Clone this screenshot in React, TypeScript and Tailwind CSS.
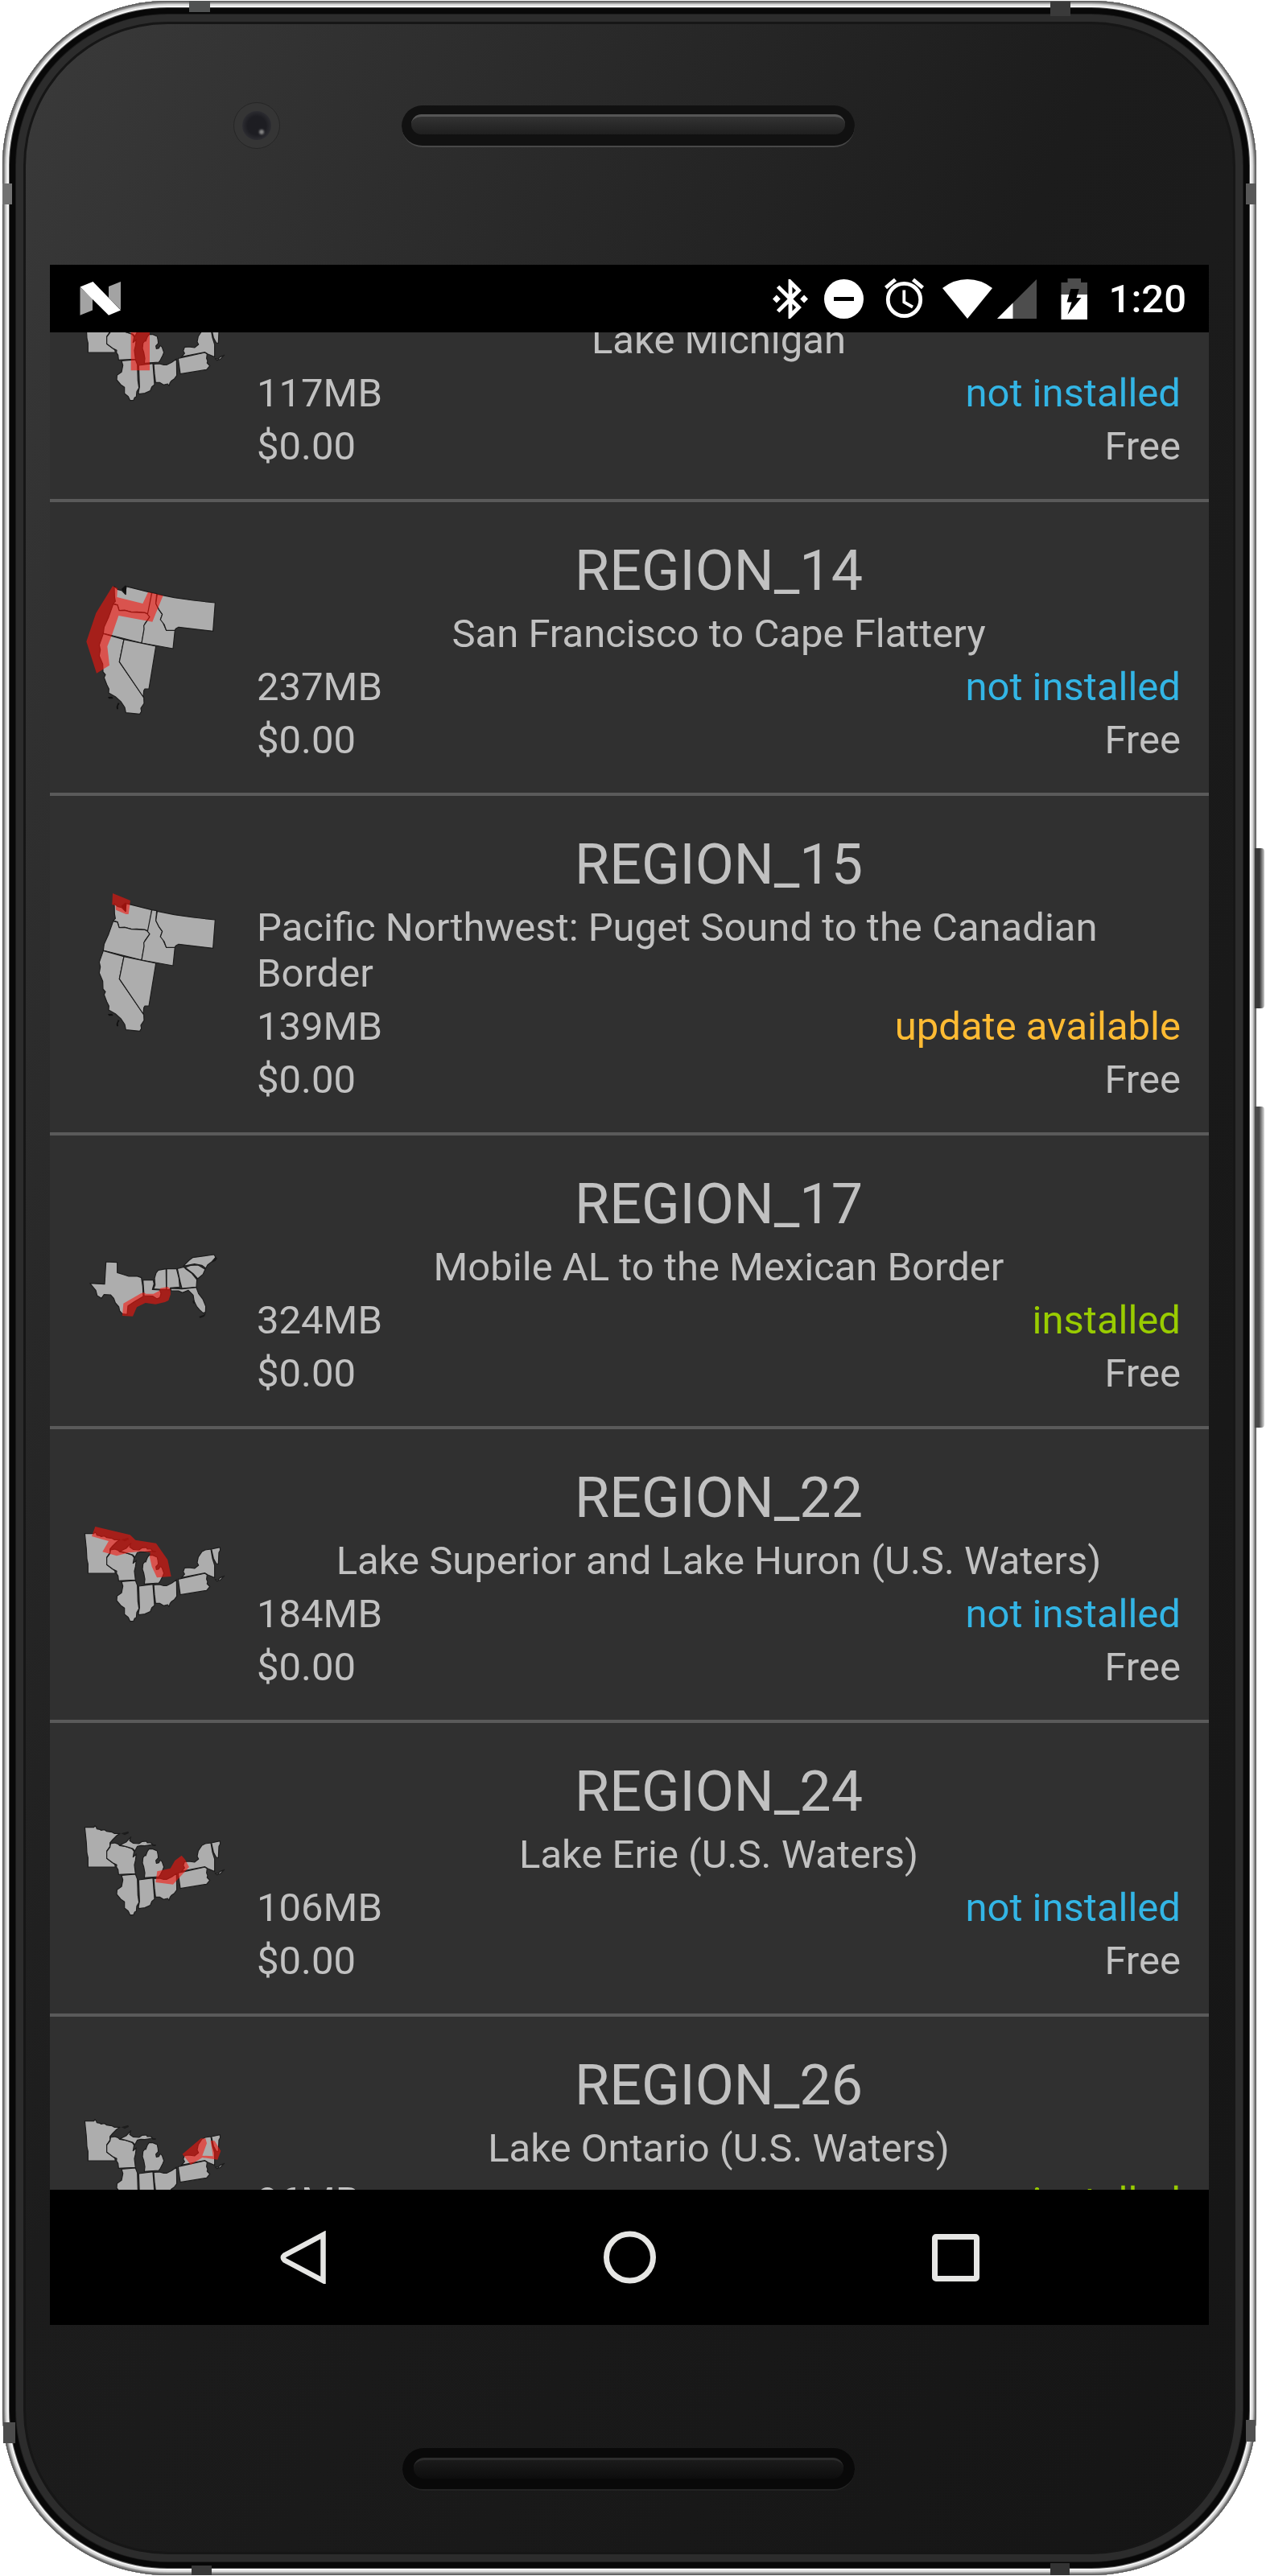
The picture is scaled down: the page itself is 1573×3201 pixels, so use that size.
import type { ReactNode } from "react";

type Status = "not installed" | "update available" | "installed";

interface Region {
  title?: string;
  description: string;
  size: string;
  status: Status;
  map: ReactNode;
}

const statusColor: Record<Status, string> = {
  "not installed": "text-[#33b5e5]",
  "update available": "text-[#ffbb33]",
  installed: "text-[#99cc00]",
};

const Coverage = ({ points }: { points: string }) => (
  <polygon points={points} fill="rgb(248,18,10)" fillOpacity="0.584" />
);

const States = ({ paths }: { paths: string[] }) => (
  <g fill="#adadad" stroke="#1c1c1c" strokeWidth="3.6" strokeLinejoin="round">
    {paths.map((d) => (
      <path key={d} d={d} />
    ))}
  </g>
);

const lakeStates = [
  "M76 92L110 92L114 86L119 92L121 98L133 100L136 103L150 101L158 107L178 110L186 115L207 115L195 123L180 138L170 150L170 163L158 180L158 208L188 230L190 240L88 240L88 205L84 188L82 150Z",
  "M172 153L188 150L200 154L206 160L230 164L253 172L260 182L256 203L268 192L265 215L261 232L265 265L202 268L200 250L194 240L195 232L180 224L158 208L158 182L170 166Z",
  "M207 158L230 147L238 138L248 128L243 142L256 151L278 153L290 145L306 144L309 150L323 150L328 156L300 161L285 160L272 163L263 180L254 171L230 164Z",
  "M316 172L330 173L346 180L349 195L350 206L341 216L343 226L352 224L357 214L364 220L371 240L366 252L358 268L352 276L298 280L300 262L296 240L291 225L293 205L300 196L303 198L309 182Z",
  "M213 271L265 267L272 285L274 345L278 372L270 386L268 405L262 408L258 418L245 419L238 404L224 393L224 370L210 360L195 342L196 325L213 313L218 288Z",
  "M277 288L330 281L336 360L326 368L320 383L300 392L278 395L276 390L280 368Z",
  "M333 283L355 282L370 286L382 286L400 277L418 264L419 326L410 338L400 345L394 352L390 364L385 357L370 361L355 352L340 352L336 320Z",
  "M424 262L518 241L524 240L532 246L530 262L534 272L532 279L542 290L530 304L432 320Z",
  "M436 257L448 243L443 234L448 220L465 219L485 222L500 210L495 200L499 180L512 160L525 153L546 150L552 185L560 210L560 257L535 246L524 239L440 255Z",
  "M548 150L580 143L581 154L576 163L574 205L566 204L556 185Z",
  "M562 263L574 264L580 257L596 250L580 266L568 269Z",
];

const westStates = [
  "M186 126L198 137L215 142L222 150L228 156L230 126L326 150L313 230L300 224L270 221L250 222L225 215L204 216L198 195L182 190L190 182L187 165Z",
  "M182 192L198 196L204 216L225 215L250 222L300 224L313 230L318 240L300 265L298 285L288 337L145 301L148 278L165 240Z",
  "M326 150L344 153L341 190L352 212L365 230L358 250L366 252L369 265L380 290L412 290L405 358L288 337L297 285L296 272L318 240L310 230Z",
  "M346 155L410 168L480 178L562 187L554 293L426 278L415 284L412 290L380 290L372 268L358 250L365 230L352 212L341 190Z",
  "M145 302L222 324L205 407L296 540L297 562L285 580L287 592L281 602L229 597L225 577L210 555L190 537L165 523L166 508L158 492L148 466L153 455L144 445L143 416L130 385L134 362L130 345Z",
  "M222 324L341 349L315 508L300 508L296 515L294 538L205 407Z",
];

const gulfStates = [
  "M155 144L197 146L197 184L222 192L240 198L270 197L287 203L292 235L294 273L262 292L237 308L234 340L216 338L206 327L203 312L190 297L184 280L172 267L148 266L138 280L122 270L117 250L95 224L150 227Z",
  "M293 212L331 212L334 226L328 247L356 249L360 262L356 277L345 282L330 272L297 270Z",
  "M350 175L379 170L380 247L362 247L332 245L338 230L336 205L342 185Z",
  "M381 170L418 170L427 205L430 238L395 241L393 248L381 247Z",
  "M421 169L445 163L452 170L475 187L494 210L492 238L438 243L432 220Z",
  "M395 243L438 245L488 240L492 240L500 262L516 283L527 310L526 332L517 335L503 322L493 310L484 292L480 268L462 250L440 259L425 252L398 252Z",
  "M450 165L470 157L498 156L505 160L525 172L517 190L497 207L480 188Z",
  "M443 160L465 138L478 128L558 117L564 127L548 145L534 155L527 168L512 157L485 152Z",
];

const RegionMap = ({ viewBox, paths, coverage, children }: {
  viewBox: string;
  paths: string[];
  coverage: string;
  children?: ReactNode;
}) => (
  <svg viewBox={viewBox} className="h-[185px] w-[185px] shrink-0 overflow-visible">
    <States paths={paths} />
    {children}
    <Coverage points={coverage} />
  </svg>
);

const LakesMap = ({ coverage }: { coverage: string }) => (
  <RegionMap viewBox="51 -33 555 555" paths={lakeStates} coverage={coverage}>
    <path d="M212 115L238 107L240 114L225 121ZM326 155L342 157L340 162L328 161Z" fill="#1c1c1c" />
  </RegionMap>
);

const WestMap = ({ coverage }: { coverage: string }) => (
  <RegionMap viewBox="51 76 555 555" paths={westStates} coverage={coverage}>
    <path d="M212 136L228 122L232 128L229 158L220 146ZM162 538L178 537L182 544L166 545ZM194 575L200 560L206 562L200 572L201 584L195 584Z" fill="#111" />
  </RegionMap>
);

const GulfMap = ({ coverage }: { coverage: string }) => (
  <RegionMap viewBox="51 -63 555 555" paths={gulfStates} coverage={coverage}>
    <path d="M563 125L570 131L563 140L550 147L557 136ZM478 290L485 288L487 298L480 299ZM502 348L518 342L528 334L522 347L506 354Z" fill="#181818" />
  </RegionMap>
);

const regions: Region[] = [
  {
    description: "Lake Michigan",
    size: "117MB",
    status: "not installed",
    map: <LakesMap coverage="248,150 318,150 318,307 248,307" />,
  },
  {
    title: "REGION_14",
    description: "San Francisco to Cape Flattery",
    size: "237MB",
    status: "not installed",
    map: (
      <WestMap coverage="180,125 198,133 196,166 292,190 312,147 368,160 328,258 202,235 178,305 160,350 168,420 120,450 82,332 118,225" />
    ),
  },
  {
    title: "REGION_15",
    description: "Pacific Northwest: Puget Sound to the Canadian Border",
    size: "139MB",
    status: "update available",
    map: <WestMap coverage="180,88 246,115 239,166 230,166 192,150 191,134 178,130" />,
  },
  {
    title: "REGION_17",
    description: "Mobile AL to the Mexican Border",
    size: "324MB",
    status: "installed",
    map: (
      <GulfMap coverage="216,345 220,299 285,262 295,258 305,263 332,263 354,252 358,242 385,237 395,245 396,265 388,288 375,294 340,302 302,297 270,313 255,347" />
    ),
  },
  {
    title: "REGION_22",
    description: "Lake Superior and Lake Huron (U.S. Waters)",
    size: "184MB",
    status: "not installed",
    map: (
      <LakesMap coverage="115,66 245,97 265,116 342,128 385,190 398,252 345,256 326,215 318,180 320,162 290,158 240,163 195,175 142,160 165,120 102,102" />
    ),
  },
  {
    title: "REGION_24",
    description: "Lake Erie (U.S. Waters)",
    size: "106MB",
    status: "not installed",
    map: <LakesMap coverage="437,197 450,212 465,240 405,305 340,297 346,256 395,245 412,216" />,
  },
  {
    title: "REGION_26",
    description: "Lake Ontario (U.S. Waters)",
    size: "96MB",
    status: "installed",
    map: (
      <LakesMap coverage="509,157 526,157 531,175 514,221 554,223 545,165 560,166 583,203 571,236 514,228 471,255 440,215" />
    ),
  },
];

const Row = ({ region }: { region: Region }) => (
  <li className="flex items-center gap-[37px] border-b-4 border-[#5a5a5a] p-[35px]">
    {region.map}
    <div className="flex min-w-0 flex-1 flex-col">
      <h2 className="h-[93px] pt-[9px] text-center text-[70px] leading-[82px]">{region.title}</h2>
      <p className="self-center pt-[7px] pb-[2px] leading-[57px]">{region.description}</p>
      <div className="flex justify-between pt-[7px] pb-[2px] leading-[57px]">
        <span>{region.size}</span>
        <span className={statusColor[region.status]}>{region.status}</span>
      </div>
      <div className="flex justify-between pt-[7px] pb-[2px] leading-[57px]">
        <span>$0.00</span>
        <span>Free</span>
      </div>
    </div>
  </li>
);

const StatusBar = () => (
  <div className="flex h-[84px] shrink-0 items-center bg-black pr-[28px] pl-[37px] text-white">
    <svg viewBox="99 350 51 42" className="mr-auto h-[42px] w-[51px]">
      <path d="M99.500 357L115 371V385.500L99.500 391.700ZM135 356L150 350V385L135 370Z" fill="#a3a3a3" />
      <path d="M99.500 356.500L115.500 350L150 385.500L135 391.700Z" fill="#fff" />
    </svg>
    <svg viewBox="3 2 18 20" className="h-[49px] w-[44px]" fill="currentColor">
      <path d="M7 12l-2-2-2 2 2 2 2-2zm10.710-4.290L12 2h-1v7.590L6.410 5 5 6.410 10.590 12 5 17.590 6.410 19 11 14.410V22h1l5.710-5.710-4.300-4.290 4.300-4.290zM13 5.830l1.880 1.880L13 9.590V5.830zm1.880 10.460L13 18.170v-3.760l1.880 1.880zM19 10l-2 2 2 2 2-2-2-2z" />
    </svg>
    <svg viewBox="0 0 49 49" className="ml-[20px] h-[49px] w-[49px]">
      <circle cx="24.500" cy="24.500" r="24.500" fill="#fff" />
      <rect x="12" y="22" width="25" height="5" fill="#000" />
    </svg>
    <svg viewBox="1100 347 49 50" className="ml-[26px] h-[50px] w-[49px]" fill="none" stroke="#fff" strokeWidth="4.800">
      <circle cx="1124.500" cy="373.500" r="20.200" />
      <path d="M1101.500 358.500L1113.500 348.500M1147.500 358.500L1135.500 348.500" />
      <path d="M1124.300 361.500V376.500L1135 382.500" strokeWidth="3.800" />
    </svg>
    <svg viewBox="1172 346 62 49" className="ml-[23px] h-[49px] w-[62px]">
      <path d="M1203 395L1172 357Q1186 346 1203 346T1234 357Z" fill="#fff" />
    </svg>
    <svg viewBox="1240 346 49 49" className="ml-[6px] h-[49px] w-[49px]">
      <path d="M1289 346V395H1240Z" fill="#4d4d4d" />
      <path d="M1259.500 375.500V395H1240Z" fill="#fff" />
    </svg>
    <svg viewBox="1319 345 33 51" className="ml-[30px] h-[51px] w-[33px]">
      <path d="M1319.500 350H1327.500V345H1344V350H1352V365H1319.500Z" fill="#4d4d4d" />
      <path d="M1319.500 365H1352V396H1319.500Z" fill="#fff" />
      <path d="M1331.400 358H1341.700L1338.500 369H1344.500L1327.400 390L1332.600 374.500H1326.600Z" fill="#000" />
    </svg>
    <span className="ml-[27px] text-[49px] leading-[57px] font-medium">1:20</span>
  </div>
);

const NavBar = () => (
  <nav className="flex h-[168px] shrink-0 items-center justify-center bg-black">
    <button className="flex w-[405px] justify-center">
      <svg viewBox="349 2772 58 66" className="h-[66px] w-[58px]">
        <path d="M402.500 2777V2834L354.500 2808.500Q351 2805.500 354.500 2802.500Z" fill="none" stroke="#e6e6e4" strokeWidth="6.500" />
      </svg>
    </button>
    <button className="flex w-[405px] justify-center">
      <svg viewBox="0 0 66 66" className="h-[66px] w-[66px]">
        <circle cx="33.500" cy="33" r="29" fill="none" stroke="#e6e6e4" strokeWidth="7" />
      </svg>
    </button>
    <button className="flex w-[405px] justify-center">
      <svg viewBox="0 0 60 60" className="h-[60px] w-[60px]">
        <rect x="4.500" y="4.500" width="52" height="52" rx="1.500" fill="none" stroke="#e6e6e4" strokeWidth="7" />
      </svg>
    </button>
  </nav>
);

export default function App() {
  return (
    <div className="relative h-[3201px] w-[1573px] overflow-hidden bg-white font-[Roboto,sans-serif]">
      <div className="absolute top-[1054px] left-[1559px] h-[199px] w-[12px] rounded-r-[4px] bg-linear-to-r from-[#383838] from-50% to-[#cfcfcf]" />
      <div className="absolute top-[1375px] left-[1559px] h-[399px] w-[12px] rounded-r-[4px] bg-linear-to-r from-[#484848] from-45% to-[#e0e0e0]" />

      <div className="mt-px ml-[3px] h-[3199px] w-[1558px] rounded-[205px] bg-linear-to-br from-[#3b3b3b] via-[#1c1c1c] via-45% to-[#151515] pt-[328px] pl-[59px] shadow-[inset_0_0_0_1px_#5a5a5a,inset_0_0_0_2px_#777,inset_0_0_0_3px_#8d8d8d,inset_0_0_0_4px_#b0b0b0,inset_0_0_0_6px_#d8d8d8,inset_0_0_0_8px_#f6f6f6,inset_0_0_0_9px_#555,inset_0_0_0_16px_#080808,inset_0_0_0_17px_#1b1b1b,inset_0_0_0_26px_#2c2c2c,inset_0_0_0_29px_#161616]">
        <main className="flex h-[2560px] w-[1440px] flex-col overflow-hidden bg-[#303030]">
          <StatusBar />
          <div className="min-h-0 flex-1 overflow-hidden">
            <ul className="-mt-[154px] text-[49px] text-[#c1c1c1]">
              {regions.map((region) => (
                <Row key={region.size} region={region} />
              ))}
            </ul>
          </div>
          <NavBar />
        </main>
      </div>

      <div className="absolute top-[1px] left-[235px] h-[14px] w-[26px] bg-[#505252]" />
      <div className="absolute top-[2px] left-[1305px] h-[18px] w-[25px] bg-[#3a3a3a]" />
      <div className="absolute top-[228px] left-[3px] h-[26px] w-[12px] bg-[#727272]" />
      <div className="absolute top-[228px] left-[1548px] h-[26px] w-[13px] bg-[#585858]" />
      <div className="absolute top-[3188px] left-[238px] h-[12px] w-[25px] bg-[#383838]" />
      <div className="absolute top-[3185px] left-[1305px] h-[15px] w-[24px] bg-[#333]" />
      <div className="absolute top-[3010px] left-[4px] h-[26px] w-[15px] bg-[#4c4c4c]" />
      <div className="absolute top-[3007px] left-[1548px] h-[27px] w-[12px] bg-[#505050]" />

      <div className="absolute top-[127px] left-[290px] flex h-[58px] w-[58px] items-center justify-center rounded-full border border-[#262626] bg-[#353535]">
        <div className="flex h-[36px] w-[36px] items-center justify-center rounded-full bg-radial from-[#1d1d22] from-45% to-[#3f3f43]">
          <div className="mt-4 ml-3 h-[6px] w-[6px] rounded-full bg-[#858585] blur-[1px]" />
        </div>
      </div>

      <div className="absolute top-[131px] left-[499px] h-[52px] w-[563px] rounded-full border-b-2 border-[#484848] bg-[#111] px-[12px] pt-[11px]">
        <div className="h-[25px] rounded-full border-t-[3px] border-[#555] bg-linear-to-b from-[#333] to-[#1f1f1f]" />
      </div>
      <div className="absolute top-[3042px] left-[500px] h-[53px] w-[562px] rounded-full border-b-2 border-[#232323] bg-[#090909] px-[14px] pt-[12px]">
        <div className="h-[26px] rounded-full border-t-[3px] border-[#2c2c2c] bg-linear-to-b from-[#1b1b1b] to-[#0d0d0d]" />
      </div>
    </div>
  );
}
